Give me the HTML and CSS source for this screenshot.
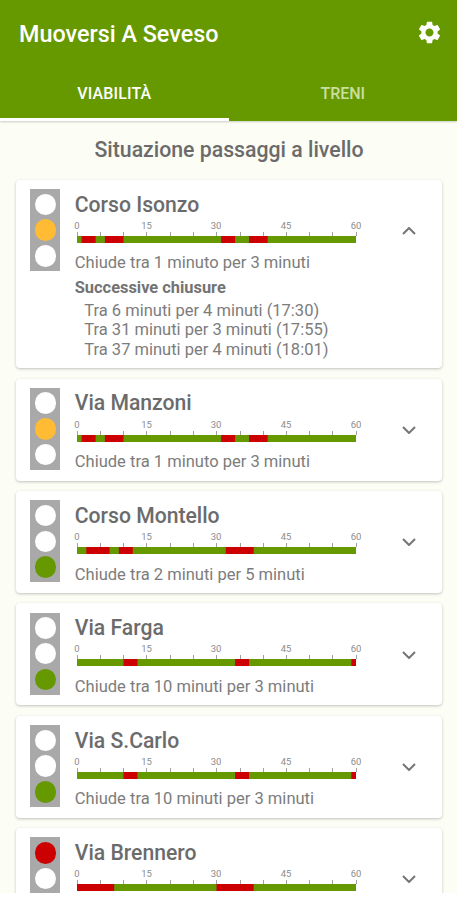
FILE: index.html
```html
<!DOCTYPE html>
<html lang="it">
<head>
<meta charset="utf-8">
<title>Muoversi A Seveso</title>
<link rel="stylesheet" href="styles.css">
</head>
<body>
<svg class="defs" aria-hidden="true">
  <symbol id="scale" viewBox="0 0 290 15">
    <g class="labels">
      <text x="5" y="7.5">0</text><text x="74.5" y="7.5">15</text><text x="144" y="7.5">30</text><text x="214" y="7.5">45</text><text x="284" y="7.5">60</text>
    </g>
    <path class="ticks" d="M5.5 11v4M28.5 11v4M51.500 11v4M74.500 11v4M98.500 11v4M121.500 11v4M144.500 11v4M168.500 11v4M191.500 11v4M214.500 11v4M237.500 11v4M260.500 11v4M284.500 11v4"/>
  </symbol>
  <symbol id="chevron" viewBox="0 0 14 8"><path d="M1 1l6 6 6-6" fill="none" stroke="#757575" stroke-width="2"/></symbol>
</svg>
<div class="app">
  <header class="header">
    <div class="toolbar">
      <h1 class="app-title">Muoversi A Seveso</h1>
      <svg class="gear" viewBox="0 0 24 24"><path fill="#fff" d="M19.14 12.94c.04-.3.06-.61.06-.94 0-.32-.02-.64-.07-.94l2.03-1.58c.18-.14.23-.41.12-.61l-1.92-3.32c-.12-.22-.37-.29-.59-.22l-2.39.96c-.5-.38-1.03-.7-1.62-.94l-.36-2.54c-.04-.24-.24-.41-.48-.41h-3.84c-.24 0-.43.17-.47.41l-.36 2.54c-.59.24-1.13.57-1.62.94l-2.39-.96c-.22-.08-.47 0-.59.22L2.74 8.87c-.12.21-.08.47.12.61l2.03 1.58c-.05.3-.09.63-.09.94s.02.64.07.94l-2.03 1.58c-.18.14-.23.41-.12.61l1.92 3.32c.12.22.37.29.59.22l2.39-.96c.5.38 1.03.7 1.62.94l.36 2.54c.05.24.24.41.48.41h3.84c.24 0 .44-.17.47-.41l.36-2.54c.59-.24 1.13-.56 1.62-.94l2.39.96c.22.08.47 0 .59-.22l1.92-3.32c.12-.22.07-.47-.12-.61zM12 15.6c-1.98 0-3.6-1.620-3.600-3.600s1.620-3.600 3.600-3.600 3.600 1.620 3.600 3.600-1.620 3.600-3.600 3.600z"/></svg>
    </div>
    <nav class="tabs">
      <div class="tab active"><span>VIABILITÀ</span></div>
      <div class="tab"><span>TRENI</span></div>
    </nav>
  </header>
  <main class="content">
    <h2 class="heading">Situazione passaggi a livello</h2>
    <div class="cards">
      <section class="card open">
        <div class="light"><i></i><i class="amber"></i><i></i></div>
        <div class="info">
          <h3 class="name">Corso Isonzo</h3>
          <svg class="scale"><use href="#scale"/></svg>
          <svg class="bar" viewBox="0 0 60 1" preserveAspectRatio="none"><path d="M1 0h3v1h-3zM6 0h4v1h-4zM31 0h3v1h-3zM37 0h4v1h-4z"/></svg>
          <p class="status">Chiude tra 1 minuto per 3 minuti</p>
          <h4 class="next-title">Successive chiusure</h4>
          <ul class="next">
            <li>Tra 6 minuti per 4 minuti (17:30)</li>
            <li>Tra 31 minuti per 3 minuti (17:55)</li>
            <li>Tra 37 minuti per 4 minuti (18:01)</li>
          </ul>
        </div>
        <svg class="chevron up"><use href="#chevron"/></svg>
      </section>
      <section class="card">
        <div class="light"><i></i><i class="amber"></i><i></i></div>
        <div class="info">
          <h3 class="name">Via Manzoni</h3>
          <svg class="scale"><use href="#scale"/></svg>
          <svg class="bar" viewBox="0 0 60 1" preserveAspectRatio="none"><path d="M1 0h3v1h-3zM6 0h4v1h-4zM31 0h3v1h-3zM37 0h4v1h-4z"/></svg>
          <p class="status">Chiude tra 1 minuto per 3 minuti</p>
        </div>
        <svg class="chevron"><use href="#chevron"/></svg>
      </section>
      <section class="card">
        <div class="light"><i></i><i></i><i class="green"></i></div>
        <div class="info">
          <h3 class="name">Corso Montello</h3>
          <svg class="scale"><use href="#scale"/></svg>
          <svg class="bar" viewBox="0 0 60 1" preserveAspectRatio="none"><path d="M2 0h5v1h-5zM9 0h3v1h-3zM32 0h6v1h-6z"/></svg>
          <p class="status">Chiude tra 2 minuti per 5 minuti</p>
        </div>
        <svg class="chevron"><use href="#chevron"/></svg>
      </section>
      <section class="card">
        <div class="light"><i></i><i></i><i class="green"></i></div>
        <div class="info">
          <h3 class="name">Via Farga</h3>
          <svg class="scale"><use href="#scale"/></svg>
          <svg class="bar" viewBox="0 0 60 1" preserveAspectRatio="none"><path d="M10 0h3v1h-3zM34 0h3v1h-3zM59 0h1v1h-1z"/></svg>
          <p class="status">Chiude tra 10 minuti per 3 minuti</p>
        </div>
        <svg class="chevron"><use href="#chevron"/></svg>
      </section>
      <section class="card">
        <div class="light"><i></i><i></i><i class="green"></i></div>
        <div class="info">
          <h3 class="name">Via S.Carlo</h3>
          <svg class="scale"><use href="#scale"/></svg>
          <svg class="bar" viewBox="0 0 60 1" preserveAspectRatio="none"><path d="M10 0h3v1h-3zM34 0h3v1h-3zM59 0h1v1h-1z"/></svg>
          <p class="status">Chiude tra 10 minuti per 3 minuti</p>
        </div>
        <svg class="chevron"><use href="#chevron"/></svg>
      </section>
      <section class="card">
        <div class="light"><i class="red"></i><i></i><i></i></div>
        <div class="info">
          <h3 class="name">Via Brennero</h3>
          <svg class="scale"><use href="#scale"/></svg>
          <svg class="bar" viewBox="0 0 60 1" preserveAspectRatio="none"><path d="M0 0h8v1h-8zM30 0h8v1h-8z"/></svg>
        </div>
        <svg class="chevron"><use href="#chevron"/></svg>
      </section>
    </div>
  </main>
</div>
</body>
</html>
```
FILE: styles.css
```css
* { box-sizing: border-box; margin: 0; padding: 0; }
body { background: #fff; font-family: Roboto, sans-serif; color: #6b6b6b; height: 900px; overflow: hidden; }
.defs { display: none; }
.app { height: 893px; overflow: hidden; background: #fcfdf5; display: flex; flex-direction: column; }
.header { height: 121px; flex: none; background: #669900; display: flex; flex-direction: column; box-shadow: 0 1px 2px rgba(0,0,0,.2); }
.toolbar { height: 68px; flex: none; display: flex; align-items: center; justify-content: space-between; padding: 0 14.500px 0 19px; }
.app-title { font-size: 23.350px; font-weight: 500; line-height: 28px; color: #fff; white-space: nowrap; }
.gear { width: 27px; height: 27px; margin-top: -3px; }
.tabs { flex: 1; display: flex; }
.tab { flex: 1; display: flex; justify-content: center; padding-top: 16px; font-size: 16px; line-height: 20px; font-weight: 500; color: #c9dfa0; border-bottom: 3px solid transparent; }
.tab.active { color: #fff; border-color: #fff; letter-spacing: .15px; }
.content { flex: 1; min-height: 0; padding: 16px 15px 0 16px; }
.heading { font-size: 21.250px; line-height: 26px; font-weight: 500; text-align: center; height: 43px; white-space: nowrap; }
.cards { display: flex; flex-direction: column; gap: 10.400px; }
.card { height: 102px; flex: none; display: flex; background: #fff; border-radius: 4px; padding: 9.200px 26.500px 0 14.300px; box-shadow: 0 1px 3px rgba(0,0,0,.24); }
.card.open { height: 188.300px; }
.light { width: 30.200px; height: 82px; flex: none; background: #a9a9a9; display: flex; flex-direction: column; align-items: center; gap: 4.200px; padding-top: 4.600px; }
.light i { width: 21.500px; height: 21.500px; border-radius: 50%; background: #fff; flex: none; }
.light .amber { background: #ffbb33; }
.light .green { background: #669900; }
.light .red { background: #cc0000; }
.info { flex: 1; padding-left: 14.300px; }
.name { font-size: 21.150px; line-height: 26px; font-weight: 500; margin-top: 2.600px; white-space: nowrap; }
.scale { display: block; width: 290px; height: 15px; margin: 3.200px 0 0 -3px; }
.labels { font: 9.500px Roboto, sans-serif; fill: #8c8c8c; text-anchor: middle; }
.ticks { stroke: #a0a0a0; stroke-width: 1; }
.bar { display: block; width: 279px; height: 7px; margin-left: 2.500px; background: #669900; fill: #cc0000; }
.status { font-size: 16.550px; line-height: 20px; margin-top: 10.500px; color: #7c7c7c; white-space: nowrap; }
.next-title { font-size: 16.400px; line-height: 20px; font-weight: 700; margin-top: 5px; color: #737373; white-space: nowrap; }
.next { list-style: none; padding-left: 9.500px; margin-top: 2.200px; font-size: 16.500px; line-height: 19.500px; color: #7c7c7c; white-space: nowrap; }
.chevron { width: 14px; height: 8px; flex: none; margin-top: 38px; }
.chevron.up { transform: rotate(180deg); }
```
